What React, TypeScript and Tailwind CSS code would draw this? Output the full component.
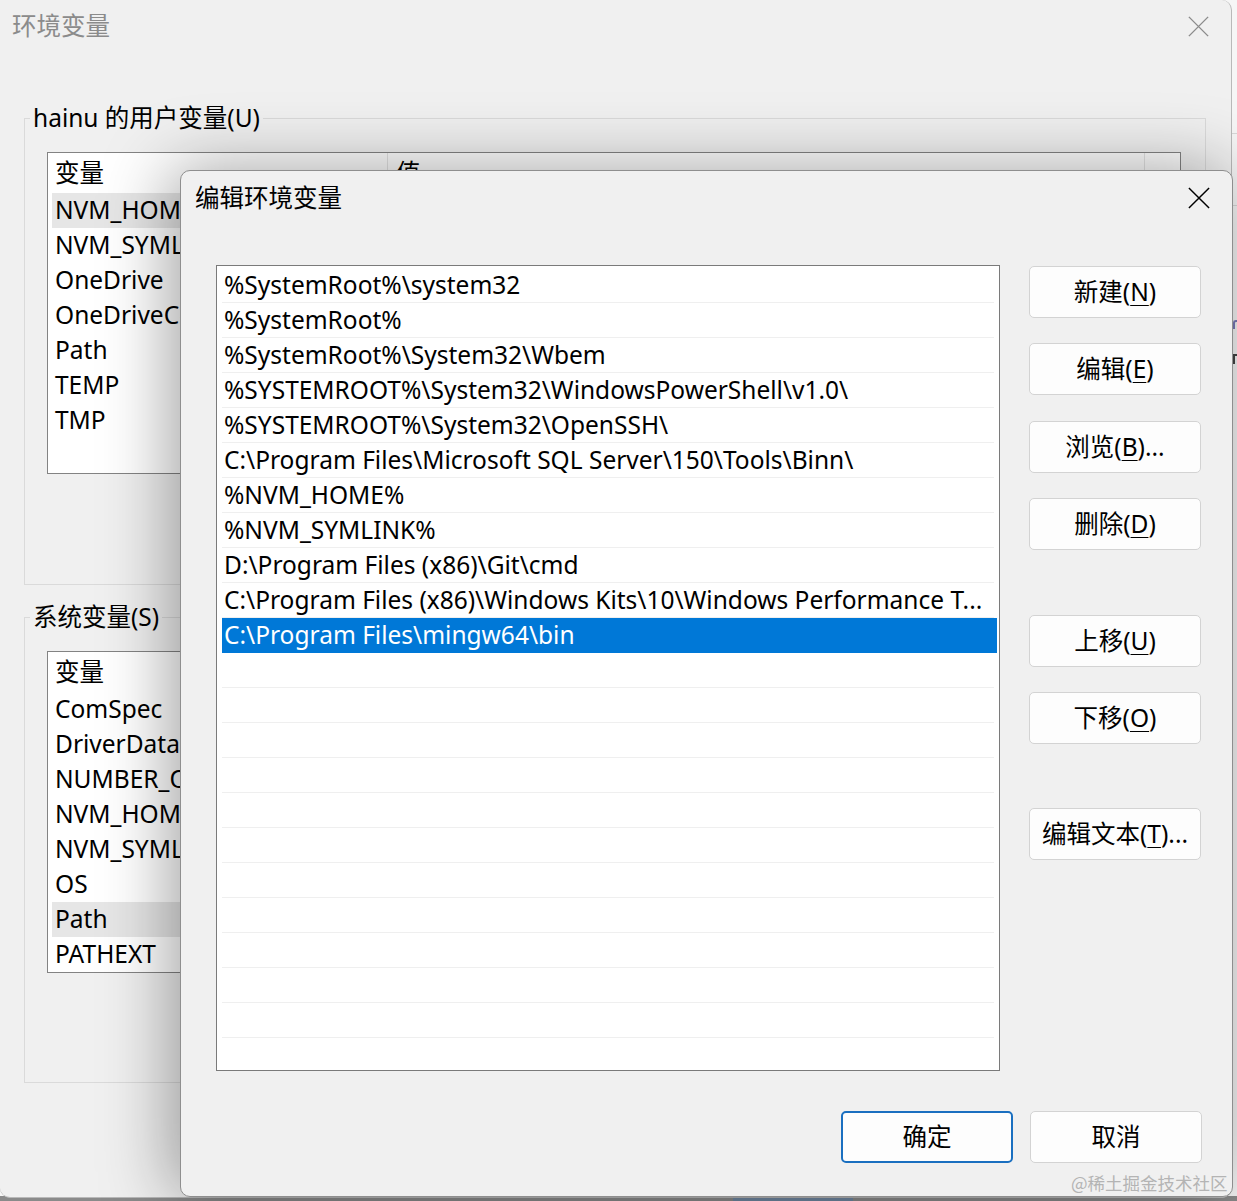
import React from "react";

const userVars = ["NVM_HOME", "NVM_SYMLINK", "OneDrive", "OneDriveConsumer", "Path", "TEMP", "TMP"];
const sysVars = ["ComSpec", "DriverData", "NUMBER_OF_PROCESSORS", "NVM_HOME", "NVM_SYMLINK", "OS", "Path", "PATHEXT"];

const paths = [
  "%SystemRoot%\\system32",
  "%SystemRoot%",
  "%SystemRoot%\\System32\\Wbem",
  "%SYSTEMROOT%\\System32\\WindowsPowerShell\\v1.0\\",
  "%SYSTEMROOT%\\System32\\OpenSSH\\",
  "C:\\Program Files\\Microsoft SQL Server\\150\\Tools\\Binn\\",
  "%NVM_HOME%",
  "%NVM_SYMLINK%",
  "D:\\Program Files (x86)\\Git\\cmd",
  "C:\\Program Files (x86)\\Windows Kits\\10\\Windows Performance T...",
  "C:\\Program Files\\mingw64\\bin",
];

const SELECTED = 10;
const TOTAL_ROWS = 22;

function CloseIcon({ className }: { className?: string }) {
  return (
    <svg viewBox="0 0 24 24" className={className} fill="none" stroke="currentColor" strokeWidth={1.6}>
      <path d="M1 1L23 23M23 1L1 23" />
    </svg>
  );
}

function Btn({ label, mn, suffix = "", primary = false }: { label: string; mn: string; suffix?: string; primary?: boolean }) {
  return (
    <button
      className={
        "w-[172px] h-[52px] rounded-[5px] bg-[#fdfdfd] text-[24.5px] text-black flex items-center justify-center " +
        (primary ? "border-2 border-[#1a6fc0]" : "border border-[#d3d3d3]")
      }
    >
      {label}
      {mn && (
        <>
          (<span className="underline underline-offset-[4px] decoration-1">{mn}</span>)
        </>
      )}
      {suffix}
    </button>
  );
}

function VarList({ items, highlight }: { items: string[]; highlight: string }) {
  return (
    <div className="mt-[17px] ml-[22px] w-[1134px] h-[322px] bg-white border border-[#838383] overflow-hidden">
      <div className="flex h-[40px] items-center">
        <div className="w-[340px] pl-[7px] border-r border-[#e5e5e5] h-full flex items-center overflow-hidden">变量</div>
        <div className="flex-1 pl-[8px] border-r border-[#e5e5e5] h-full flex items-center overflow-hidden">值</div>
        <div className="w-[35px]" />
      </div>
      {items.map((v) => (
        <div
          key={v}
          className={
            "h-[35px] w-[128px] ml-[4px] pl-[3px] flex items-center whitespace-nowrap overflow-hidden " +
            (v === highlight ? "bg-[#e6e6e6]" : "")
          }
        >
          {v}
        </div>
      ))}
    </div>
  );
}

export default function App() {
  return (
    <div className="relative w-[1237px] h-[1201px] overflow-hidden bg-[#f6f6f6] text-black font-['Noto_Sans','Noto_Sans_CJK_SC',sans-serif]">
      {/* strip of another window on the right */}
      <div className="absolute left-[1232px] top-[133px] w-[10px] border-t border-[#d8d8d8]" />
      <div className="absolute left-[1232px] top-[205px] w-[10px] border-t border-[#d8d8d8]" />
      <div className="absolute left-[1233px] top-[320px] w-[4px] h-[9px] border-l-2 border-t-2 border-[#7a7ab8] rounded-tl-[3px]" />
      <div className="absolute left-[1233px] top-[354px] w-[4px] h-[10px] border-l-2 border-t-2 border-[#444]" />

      {/* bottom strip */}
      <div className="absolute left-0 top-[1196px] w-full h-[5px] bg-[#8a8a8a]">
        <div className="ml-[733px] mt-[2px] w-[120px] h-[3px] bg-[#5d86b0] opacity-60" />
      </div>

      {/* background window: 环境变量 */}
      <div className="absolute left-0 top-0 w-[1232px] h-[1198px] bg-[#f0f0f0] border-r border-b border-[#b9b9b9] rounded-tr-[10px] rounded-b-[10px] text-[24.5px]">
        <div className="flex items-center justify-between h-[52px] pl-[12px] pr-[22px]">
          <span className="text-[#8b8b8b]">环境变量</span>
          <CloseIcon className="w-[21px] h-[21px] text-[#8b8b8b]" />
        </div>

        <div className="mt-[66px] ml-[24px] w-[1182px] h-[467px] border border-[#dadada]">
          <div className="-mt-[18px] ml-[5px] px-[3px] w-fit bg-[#f0f0f0] leading-[34px]">hainu 的用户变量(U)</div>
          <VarList items={userVars} highlight="NVM_HOME" />
        </div>

        <div className="mt-[32px] ml-[24px] w-[1182px] h-[466px] border border-[#dadada]">
          <div className="-mt-[18px] ml-[5px] px-[3px] w-fit bg-[#f0f0f0] leading-[34px]">系统变量(S)</div>
          <VarList items={sysVars} highlight="Path" />
        </div>
      </div>

      {/* foreground dialog: 编辑环境变量 */}
      <div className="absolute left-[180px] top-[170px] w-[1053px] h-[1027px] bg-[#f0f0f0] border border-[#8e8e8e] rounded-[10px] shadow-[-8px_0_70px_rgba(0,0,0,0.38)] text-[24.5px]">
        <div className="flex items-center justify-between h-[54px] pl-[14px] pr-[22px]">
          <span>编辑环境变量</span>
          <CloseIcon className="w-[22px] h-[22px]" />
        </div>

        <div className="flex mt-[40px] ml-[35px]">
          <div className="w-[784px] h-[806px] bg-white border border-[#7a7a7a] pt-[2px] pl-[5px] pr-[2px] overflow-hidden">
            {Array.from({ length: TOTAL_ROWS }).map((_, i) => {
              const text = paths[i];
              const sel = i === SELECTED;
              return (
                <div
                  key={i}
                  className={
                    "h-[35px] flex items-center pl-[2px] whitespace-nowrap overflow-hidden " +
                    (sel ? "bg-[#0078d7] text-white" : "border-b border-[#efefef] mr-[3px]")
                  }
                >
                  {text ?? ""}
                </div>
              );
            })}
          </div>

          <div className="ml-[29px] flex flex-col">
            <div className="mt-[1px]"><Btn label="新建" mn="N" /></div>
            <div className="mt-[25px]"><Btn label="编辑" mn="E" /></div>
            <div className="mt-[26px]"><Btn label="浏览" mn="B" suffix="..." /></div>
            <div className="mt-[25px]"><Btn label="删除" mn="D" /></div>
            <div className="mt-[65px]"><Btn label="上移" mn="U" /></div>
            <div className="mt-[25px]"><Btn label="下移" mn="O" /></div>
            <div className="mt-[64px]"><Btn label="编辑文本" mn="T" suffix="..." /></div>
          </div>
        </div>

        <div className="flex justify-end gap-[17px] mt-[40px] mr-[30px]">
          <Btn label="确定" mn="" primary />
          <Btn label="取消" mn="" />
        </div>
      </div>

      {/* watermark */}
      <div className="absolute left-[1071px] top-[1172px] text-[17.5px] text-[#b4b4b4] font-['Noto_Sans_CJK_SC',sans-serif] leading-[22px] whitespace-nowrap">
        @稀土掘金技术社区
      </div>
    </div>
  );
}
